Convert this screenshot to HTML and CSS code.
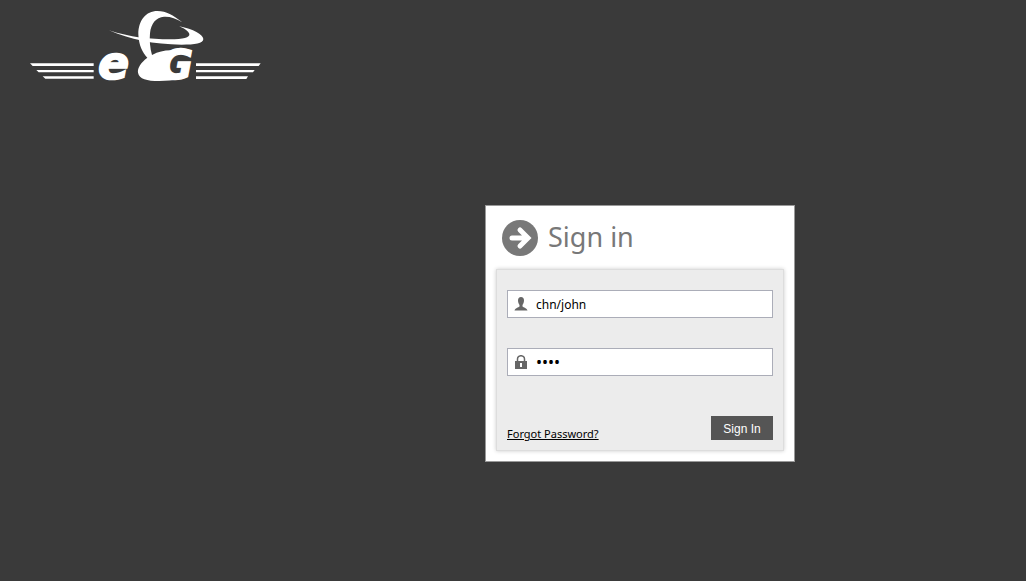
FILE: index.html
```html
<!DOCTYPE html>
<html lang="en">
<head>
    <meta charset="UTF-8">
    <meta name="viewport" content="width=device-width, initial-scale=1.0">
    <title>Sign in</title>
    <link rel="stylesheet" href="styles.css">
</head>
<body>
    <header class="header">
        <svg class="logo" viewBox="30 30 693 216" role="img" aria-label="eG">
            <g fill="#fff">
                <!-- wings -->
                <path d="M30 190H221V198H38zM49 210H221V217H56zM68 229H221V236H76z"/>
                <path d="M528 190H722L716 198H528zM528 210H704L699 217H528zM528 229H684L679 237H528z"/>
                <!-- ribbon -->
                <path d="M487 67C458 45 440 33 412 33C378 33 355 61 355 103C356 135 368 160 382 173C363 187 352 204 354 218C358 237 380 243 418 243C440 243 460 242 475 238L440 226C425 215 422 195 438 176L470 152C440 149 420 153 396 165C390 145 388 120 390 100C393 70 408 52 432 50C450 49 468 55 487 67z"/>
                <path d="M267 91C330 112 390 118 450 118C490 118 510 112 508 102C506 94 494 86 478 79C520 88 549 103 550 117C550 130 525 134 485 134C400 134 330 118 267 91z"/>
            </g>
            <text class="logo-letter logo-e" x="234" y="236">e</text>
            <text class="logo-letter logo-g" x="419" y="238">G</text>
        </svg>
    </header>

    <main class="main">
        <section class="card">
            <div class="card-title">
                <svg class="title-icon" viewBox="0 0 36 36" aria-hidden="true">
                    <circle cx="18" cy="18" r="18" fill="#787878"/>
                    <path d="M10 18H24M18 10L26 18L18 26" fill="none" stroke="#fff" stroke-width="5" stroke-linecap="round"/>
                </svg>
                <h1>Sign in</h1>
            </div>

            <form class="login-form">
                <div class="field">
                    <svg class="field-icon" viewBox="0 0 14 14" aria-hidden="true">
                        <path d="M7 0c2 0 3 1.500 3 3.500C10 5.500 9 7 8.500 8v1.500c1 1 4.500 1.500 5 4H.5c.5-2.500 4-3 5-4V8C5 7 4 5.500 4 3.500 4 1.500 5 0 7 0z" fill="#666"/>
                    </svg>
                    <input type="text" id="username" aria-label="Username" value="chn/john">
                </div>
                <div class="field">
                    <svg class="field-icon" viewBox="0 0 14 14" aria-hidden="true">
                        <path d="M3.500 7V4a3.500 3.300 0 0 1 7 0v3" fill="none" stroke="#666" stroke-width="1.500"/>
                        <path d="M1 6h12v8H1zM6 8v4h2V8z" fill="#666" fill-rule="evenodd"/>
                    </svg>
                    <input type="password" id="password" aria-label="Password" value="john">
                </div>
                <div class="actions">
                    <a class="forgot" href="#">Forgot Password?</a>
                    <button class="signin-button" type="submit">Sign In</button>
                </div>
            </form>
        </section>
    </main>
</body>
</html>
```

FILE: styles.css
```css
* {
    box-sizing: border-box;
}

body {
    margin: 0;
    background-color: #3a3a3a;
    font-family: "Noto Sans", "Open Sans", sans-serif;
}

.header {
    padding: 10px 30px;
}

.logo {
    display: block;
    width: 231px;
    height: 72px;
    overflow: visible;
}

.logo-letter {
    font-family: "DejaVu Sans", sans-serif;
    font-style: italic;
    font-weight: bold;
    fill: #fff;
    stroke: #fff;
}

.logo-e {
    font-size: 138px;
    stroke-width: 5px;
}

.logo-g {
    font-size: 122px;
    stroke-width: 4px;
}

.main {
    display: grid;
    grid-template-columns: 2.1fr 310px 1fr;
    padding-top: 113px;
}

.card {
    grid-column: 2;
    padding: 10px;
    background-color: #fff;
    border: 1px solid #999;
}

.card-title {
    display: flex;
    align-items: center;
    gap: 10px;
    height: 44px;
    padding-left: 6px;
    margin-bottom: 9px;
}

.title-icon {
    width: 36px;
    height: 36px;
}

.card-title h1 {
    margin: 0;
    padding-bottom: 2px;
    font-size: 27px;
    font-weight: normal;
    line-height: 36px;
    color: #787878;
}

.login-form {
    padding: 20px 10px 10px;
    background-color: #ececec;
    border: 1px solid #ddd;
    box-shadow: 0 0 4px #ccc;
}

.field {
    display: flex;
    align-items: center;
    height: 28px;
    padding: 0 6px;
    margin-bottom: 30px;
    background-color: #fff;
    border: 1px solid #abadb8;
}

.field-icon {
    flex: none;
    width: 14px;
    height: 14px;
}

.field input {
    flex: 1;
    min-width: 0;
    height: 24px;
    padding: 0 8px;
    border: 0;
    outline: 0;
    background: none;
    font-family: inherit;
    font-size: 12px;
    color: #000;
}

.field input[type="password"] {
    font-size: 16px;
}

.actions {
    display: flex;
    align-items: flex-end;
    justify-content: space-between;
    padding-top: 10px;
}

.forgot {
    font-size: 11px;
    line-height: 12px;
    color: #000;
}

.signin-button {
    width: 62px;
    height: 24px;
    padding: 1px 0 0;
    border: 0;
    background-color: #555;
    color: #fff;
    font-family: "Liberation Sans", Arial, sans-serif;
    font-size: 12px;
}
```
